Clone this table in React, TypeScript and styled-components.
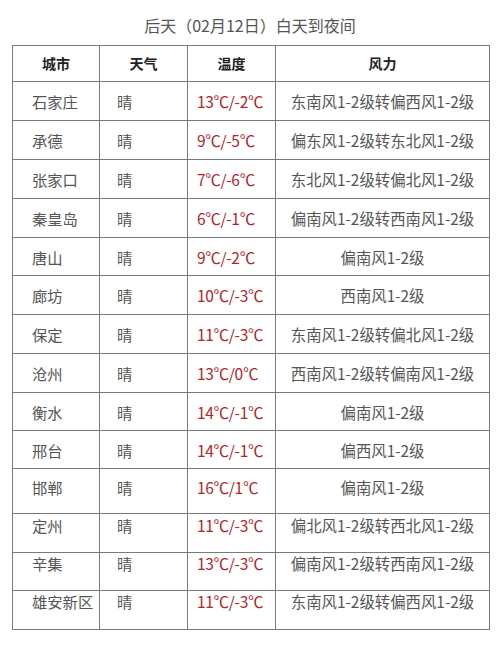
import React from "react";
import styled, { createGlobalStyle } from "styled-components";

const Global = createGlobalStyle`
  html, body { margin: 0; padding: 0; background: #fff; }
  body { width: 500px; font-family: "Noto Sans CJK SC", "Noto Sans", sans-serif; }
`;

const Page = styled.div`
  width: 500px;
  height: 646px;
  background: #fff;
  display: flex;
  flex-direction: column;
  align-items: flex-start;
`;

const Title = styled.div`
  width: 500px;
  height: 45px;
  display: flex;
  align-items: center;
  justify-content: center;
  padding-top: 5px;
  box-sizing: border-box;
  font-size: 16px;
  color: #555;
`;

const Table = styled.div`
  margin-left: 12px;
  width: 478px;
  border-top: 1px solid #7a7a7a;
  border-left: 1px solid #7a7a7a;
  box-sizing: border-box;
  display: flex;
  flex-direction: column;
`;

const Row = styled.div<{ $h: number }>`
  display: grid;
  grid-template-columns: 87px 88px 88px 214px;
  height: ${(p) => p.$h}px;
`;

const Cell = styled.div<{ $align?: "left" | "center"; $pad?: number; $shift?: number }>`
  border-right: 1px solid #7a7a7a;
  border-bottom: 1px solid #7a7a7a;
  display: flex;
  align-items: center;
  justify-content: ${(p) => (p.$align === "center" ? "center" : "flex-start")};
  padding-left: ${(p) => p.$pad ?? 0}px;
  padding-bottom: ${(p) => (p.$shift ?? 0) * 2}px;
  box-sizing: border-box;
  font-size: 15.3px;
  color: #555;
  white-space: nowrap;
  overflow: hidden;
`;

const HeadCell = styled(Cell)`
  font-size: 14px;
  font-weight: 700;
  color: #222;
  padding-bottom: 2px;
`;

const Temp = styled(Cell)`
  color: #b0252a;
  font-size: 15.5px;
  letter-spacing: -0.3px;
`;

const Wind = styled(Cell)`
  font-size: 15.4px;
`;

type R = { city: string; temp: string; wind: string; h: number; shift: number };

const rows: R[] = [
  { city: "石家庄", temp: "13℃/-2℃", wind: "东南风1-2级转偏西风1-2级", h: 39, shift: 0 },
  { city: "承德", temp: "9℃/-5℃", wind: "偏东风1-2级转东北风1-2级", h: 39, shift: 0 },
  { city: "张家口", temp: "7℃/-6℃", wind: "东北风1-2级转偏北风1-2级", h: 39, shift: 0 },
  { city: "秦皇岛", temp: "6℃/-1℃", wind: "偏南风1-2级转西南风1-2级", h: 39, shift: 0 },
  { city: "唐山", temp: "9℃/-2℃", wind: "偏南风1-2级", h: 38, shift: 0 },
  { city: "廊坊", temp: "10℃/-3℃", wind: "西南风1-2级", h: 39, shift: 0 },
  { city: "保定", temp: "11℃/-3℃", wind: "东南风1-2级转偏北风1-2级", h: 39, shift: 0 },
  { city: "沧州", temp: "13℃/0℃", wind: "西南风1-2级转偏南风1-2级", h: 39, shift: 0 },
  { city: "衡水", temp: "14℃/-1℃", wind: "偏南风1-2级", h: 38, shift: 0 },
  { city: "邢台", temp: "14℃/-1℃", wind: "偏西风1-2级", h: 38, shift: 0 },
  { city: "邯郸", temp: "16℃/1℃", wind: "偏南风1-2级", h: 45, shift: 4 },
  { city: "定州", temp: "11℃/-3℃", wind: "偏北风1-2级转西北风1-2级", h: 39, shift: 8 },
  { city: "辛集", temp: "13℃/-3℃", wind: "偏南风1-2级转西南风1-2级", h: 38, shift: 9 },
  { city: "雄安新区", temp: "11℃/-3℃", wind: "东南风1-2级转偏西风1-2级", h: 39, shift: 9 },
];

export default function App() {
  return (
    <Page>
      <Global />
      <Title>后天（02月12日）白天到夜间</Title>
      <Table>
        <Row $h={36}>
          <HeadCell $align="center">城市</HeadCell>
          <HeadCell $align="center">天气</HeadCell>
          <HeadCell $align="center">温度</HeadCell>
          <HeadCell $align="center">风力</HeadCell>
        </Row>
        {rows.map((r) => (
          <Row key={r.city} $h={r.h}>
            <Cell $pad={19} $shift={r.shift}>{r.city}</Cell>
            <Cell $pad={17} $shift={r.shift}>晴</Cell>
            <Temp $pad={9} $shift={r.shift}>{r.temp}</Temp>
            <Wind $align="center" $shift={r.shift}>{r.wind}</Wind>
          </Row>
        ))}
      </Table>
    </Page>
  );
}
